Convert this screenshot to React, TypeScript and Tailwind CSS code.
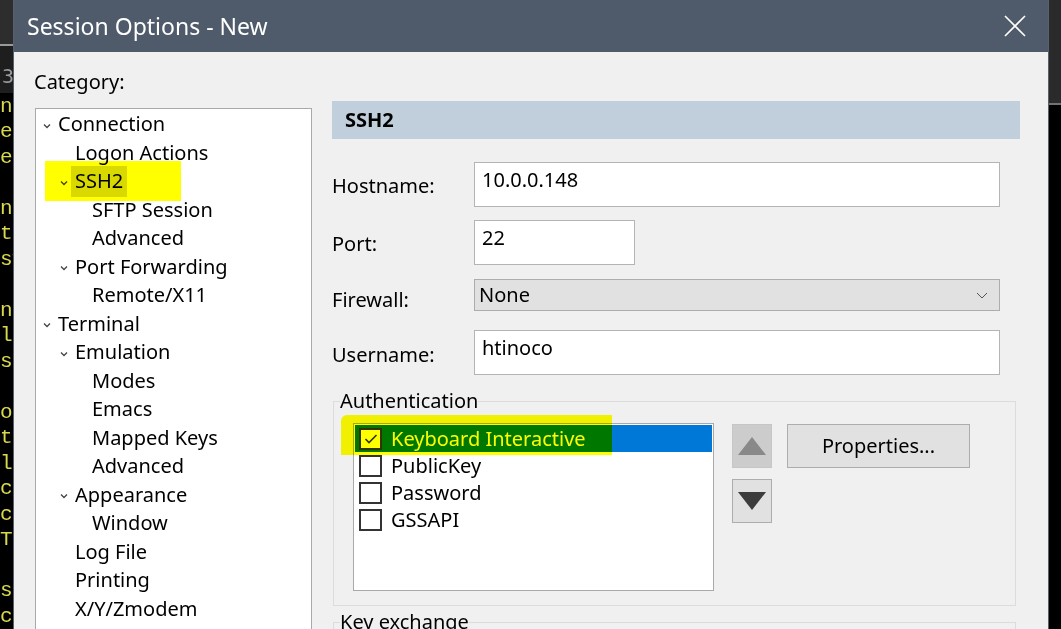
import { Fragment } from "react";

const tree = [
  { label: "Connection", level: 0, open: true },
  { label: "Logon Actions", level: 1 },
  { label: "SSH2", level: 1, open: true, selected: true },
  { label: "SFTP Session", level: 2 },
  { label: "Advanced", level: 2 },
  { label: "Port Forwarding", level: 1, open: true },
  { label: "Remote/X11", level: 2 },
  { label: "Terminal", level: 0, open: true },
  { label: "Emulation", level: 1, open: true },
  { label: "Modes", level: 2 },
  { label: "Emacs", level: 2 },
  { label: "Mapped Keys", level: 2 },
  { label: "Advanced", level: 2 },
  { label: "Appearance", level: 1, open: true },
  { label: "Window", level: 2 },
  { label: "Log File", level: 1 },
  { label: "Printing", level: 1 },
  { label: "X/Y/Zmodem", level: 1 },
];

const indent = ["pl-[7px]", "pl-[24px]", "pl-[41px]"];

const authMethods = [
  { label: "Keyboard Interactive", checked: true },
  { label: "PublicKey" },
  { label: "Password" },
  { label: "GSSAPI" },
];

// bits of the terminal showing behind the dialog
const termLines = ["nl", "e", "es", "", "nl", "t", "sw", "", "n", "l", "s", "", "o", "t", "l", "c", "c", "T", "", "s", "c"];

function Chevron() {
  return (
    <svg width="8" height="6" viewBox="0 0 8 6" className="mt-[3px]">
      <polyline points="1,1.5 4,4.5 7,1.5" fill="none" stroke="#444" strokeWidth="1.3" />
    </svg>
  );
}

function TerminalEdge() {
  return (
    <div className="flex w-[13px] shrink-0 flex-col overflow-hidden">
      <div className="h-[50px] bg-[#2d2d2d]" />
      <div className="h-[2px] bg-[#9a9a9a]" />
      <div className="flex h-[51px] items-center bg-[#1e1e1e] pl-[2px] pt-[14px] font-['DejaVu_Sans_Mono',monospace] text-[20px] text-[#9a9a9a]">
        3
      </div>
      <div className="flex-1 bg-black pt-[1px] font-['Liberation_Mono',monospace] text-[21px] leading-[25.5px] text-[#d8d84e]">
        {termLines.map((t, i) => (
          <div key={i} className="h-[25.5px] whitespace-pre">
            {t || " "}
          </div>
        ))}
      </div>
    </div>
  );
}

function Checkbox({ checked }: { checked?: boolean }) {
  return (
    <div className="flex h-[22px] w-[23px] shrink-0 items-center justify-center border-2 border-[#333333] bg-white">
      {checked && (
        <svg width="14" height="12" viewBox="0 0 14 12">
          <polyline points="1.5,6 5,9.5 12.5,2" fill="none" stroke="#333" strokeWidth="1.6" />
        </svg>
      )}
    </div>
  );
}

export default function App() {
  return (
    <div className="flex h-[629px] w-[1061px] overflow-hidden bg-black font-['Noto_Sans',sans-serif] text-[20px] text-black">
      <TerminalEdge />

      {/* Dialog */}
      <div className="flex w-[1036px] shrink-0 flex-col border-x border-[#58626e] bg-[#f0f0f0]">
        <div className="flex h-[52px] shrink-0 items-center justify-between bg-[#4f5b6a] pl-[13px] pr-[22px] text-white">
          <span className="text-[23px] leading-[30px]">Session Options - New</span>
          <svg width="22" height="22" viewBox="0 0 22 22">
            <path d="M1 1 L21 21 M21 1 L1 21" stroke="white" strokeWidth="1.6" />
          </svg>
        </div>

        <div className="flex flex-1 pl-[20px]">
          {/* Category tree */}
          <div className="flex w-[278px] shrink-0 flex-col pt-[16px]">
            <div className="leading-[28px]">Category:</div>
            <div className="ml-[1px] mt-[12px] flex-1 border border-[#a9a9a9] bg-white pt-[1px]">
              {tree.map((item, i) => (
                <div key={i} className={`relative flex h-[28.5px] items-center ${indent[item.level]}`}>
                  <div className="flex w-[15px] shrink-0 items-center">{item.open && <Chevron />}</div>
                  {item.selected ? (
                    <Fragment>
                      <span className="-ml-[4px] flex h-[31px] items-center bg-[#d9d9d9] px-[4px] leading-[28px]">{item.label}</span>
                      <div className="absolute left-[9px] top-[-6px] h-[40px] w-[136px] bg-[#ffff00] mix-blend-multiply" />
                    </Fragment>
                  ) : (
                    <span className="whitespace-nowrap leading-[28px]">{item.label}</span>
                  )}
                </div>
              ))}
            </div>
          </div>

          {/* SSH2 page */}
          <div className="ml-[20px] flex w-[688px] shrink-0 flex-col pt-[49px]">
            <div className="flex h-[38px] items-center bg-[#c0cfdb] pl-[13px] font-bold">SSH2</div>

            <div className="mt-[23px] flex h-[45px] items-center">
              <div className="w-[142px] pt-[2px]">Hostname:</div>
              <div className="h-[45px] w-[526px] border border-[#b4b4b4] bg-white px-[7px] pt-[3px] leading-[28px]">10.0.0.148</div>
            </div>

            <div className="mt-[13px] flex h-[45px] items-center">
              <div className="w-[142px] pt-[2px]">Port:</div>
              <div className="h-[45px] w-[161px] border border-[#b4b4b4] bg-white px-[7px] pt-[3px] leading-[28px]">22</div>
            </div>

            <div className="mt-[14px] flex h-[32px] items-center">
              <div className="w-[142px] pt-[9px]">Firewall:</div>
              <div className="flex h-[32px] w-[526px] items-center justify-between border border-[#adadad] bg-[#e1e1e1] pl-[4px] pr-[11px] leading-[28px]">
                <span>None</span>
                <svg width="12" height="7" viewBox="0 0 12 7">
                  <polyline points="1,1 6,6 11,1" fill="none" stroke="#555" strokeWidth="1" />
                </svg>
              </div>
            </div>

            <div className="mt-[19px] flex h-[45px] items-center">
              <div className="w-[142px] pt-[5px]">Username:</div>
              <div className="h-[45px] w-[526px] border border-[#b4b4b4] bg-white px-[7px] pt-[3px] leading-[28px]">htinoco</div>
            </div>

            {/* Authentication group */}
            <fieldset className="ml-[1px] mr-[4px] mt-[12px] border border-[#dcdcdc] pb-[14px]">
              <legend className="ml-[6px] leading-[28px]">Authentication</legend>
              <div className="mt-[8px] flex items-start pl-[19px]">
                <div className="h-[168px] w-[361px] border border-[#a9a9a9] bg-white p-[1px]">
                  {authMethods.map((m) => (
                    <div
                      key={m.label}
                      className={`relative flex h-[27px] items-center gap-[9px] pl-[4px] leading-[27px] ${
                        m.checked ? "bg-[#0078d7] text-white" : ""
                      }`}
                    >
                      <Checkbox checked={m.checked} />
                      <span>{m.label}</span>
                      {m.checked && (
                        <div className="absolute left-[-14px] top-[-10px] h-[40px] w-[271px] rounded-tl-[6px] bg-[#ffff00] mix-blend-multiply" />
                      )}
                    </div>
                  ))}
                </div>

                <div className="ml-[18px] flex flex-col gap-[11px] pt-[1px]">
                  <div className="flex h-[44px] w-[40px] items-center justify-center border border-[#c6c6c6] bg-[#cccccc]">
                    <svg width="28" height="18" viewBox="0 0 28 18">
                      <polygon points="14,0 28,18 0,18" fill="#898989" />
                    </svg>
                  </div>
                  <div className="flex h-[44px] w-[40px] items-center justify-center border border-[#adadad] bg-[#e1e1e1]">
                    <svg width="28" height="18" viewBox="0 0 28 18">
                      <polygon points="0,0 28,0 14,18" fill="#3c3c3c" />
                    </svg>
                  </div>
                </div>

                <div className="ml-[15px] mt-[1px] flex h-[44px] w-[183px] items-center justify-center border border-[#adadad] bg-[#e1e1e1]">
                  Properties...
                </div>
              </div>
            </fieldset>

            <fieldset className="ml-[1px] mr-[4px] mt-[2px] h-[60px] border border-[#dcdcdc]">
              <legend className="ml-[6px] leading-[28px]">Key exchange</legend>
            </fieldset>
          </div>
        </div>
      </div>

      {/* right edge of the desktop */}
      <div className="flex w-[12px] shrink-0 flex-col">
        <div className="h-[103px] bg-[#2a2a2a]" />
        <div className="h-[2px] bg-[#727272]" />
        <div className="flex-1 bg-black" />
      </div>
    </div>
  );
}
